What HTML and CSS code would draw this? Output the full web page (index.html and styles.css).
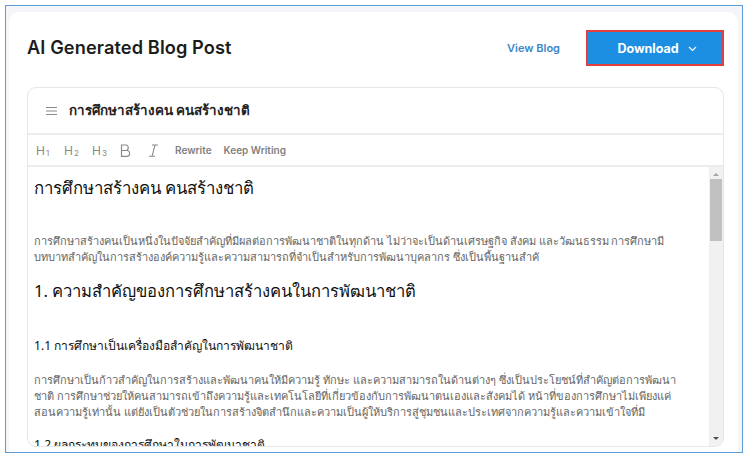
FILE: index.html
```html
<!DOCTYPE html>
<html lang="th">
<head>
<meta charset="utf-8">
<link rel="stylesheet" href="styles.css">
</head>
<body>
<div class="frame">
  <div class="card">
    <div class="topbar">
      <h1 class="page-title">AI Generated Blog Post</h1>
      <div class="actions">
        <a class="view-link">View Blog</a>
        <button class="download">Download
          <svg class="chev" width="9" height="6" viewBox="0 0 9 6"><path d="M1 1l3.5 3.5L8 1" fill="none" stroke="#fff" stroke-width="1.1"/></svg>
        </button>
      </div>
    </div>
    <div class="editor">
      <div class="ed-head">
        <svg class="burger" width="11" height="8" viewBox="0 0 11 8"><path d="M0 .5h11M0 4h11M0 7.5h11" stroke="#8a8a8a" stroke-width="1"/></svg>
        <span class="ed-title">การศึกษาสร้างคน คนสร้างชาติ</span>
      </div>
      <div class="toolbar">
        <span class="tb-h">H<sub>1</sub></span>
        <span class="tb-h">H<sub>2</sub></span>
        <span class="tb-h">H<sub>3</sub></span>
        <svg class="tb-icon" width="12" height="13" viewBox="0 0 12 13"><path d="M1.5 1h5a3 3 0 0 1 0 5.5h-5zM1.5 6.5h6a3 3 0 0 1 0 5.8h-6z" fill="none" stroke="#8a8a8a" stroke-width="1.2"/></svg>
        <svg class="tb-icon" width="11" height="13" viewBox="0 0 11 13"><path d="M4 1h6M1 12.3h6M7 1L4 12.3" fill="none" stroke="#8a8a8a" stroke-width="1.1"/></svg>
        <span class="tb-text">Rewrite</span>
        <span class="tb-text">Keep Writing</span>
      </div>
      <div class="body">
        <div class="content">
          <h2 class="c-h1">การศึกษาสร้างคน คนสร้างชาติ</h2>
          <p class="c-p"><span>การศึกษาสร้างคนเป็นหนึ่งในปัจจัยสำคัญที่มีผลต่อการพัฒนาชาติในทุกด้าน ไม่ว่าจะเป็นด้านเศรษฐกิจ สังคม และวัฒนธรรม การศึกษามี</span><span>บทบาทสำคัญในการสร้างองค์ความรู้และความสามารถที่จำเป็นสำหรับการพัฒนาบุคลากร ซึ่งเป็นพื้นฐานสำคั</span></p>
          <h2 class="c-h2">1. ความสำคัญของการศึกษาสร้างคนในการพัฒนาชาติ</h2>
          <h3 class="c-h3">1.1 การศึกษาเป็นเครื่องมือสำคัญในการพัฒนาชาติ</h3>
          <p class="c-p"><span>การศึกษาเป็นก้าวสำคัญในการสร้างและพัฒนาคนให้มีความรู้ ทักษะ และความสามารถในด้านต่างๆ ซึ่งเป็นประโยชน์ที่สำคัญต่อการพัฒนา</span><span>ชาติ การศึกษาช่วยให้คนสามารถเข้าถึงความรู้และเทคโนโลยีที่เกี่ยวข้องกับการพัฒนาตนเองและสังคมได้ หน้าที่ของการศึกษาไม่เพียงแค่</span><span>สอนความรู้เท่านั้น แต่ยังเป็นตัวช่วยในการสร้างจิตสำนึกและความเป็นผู้ให้บริการสู่ชุมชนและประเทศจากความรู้และความเข้าใจที่มี</span></p>
          <h3 class="c-h3 last">1.2 ผลกระทบของการศึกษาในการพัฒนาชาติ</h3>
        </div>
        <div class="scrollbar">
          <div class="arrow up"></div>
          <div class="thumb"></div>
          <div class="arrow down"></div>
        </div>
      </div>
    </div>
  </div>
</div>
</body>
</html>
```
FILE: styles.css
```css
* { box-sizing: border-box; }
html, body { margin: 0; padding: 0; background: #fff; }
body { width: 749px; height: 457px; overflow: hidden; padding: 5px 0 0 5px; font-family: "Noto Sans", sans-serif; }

.frame {
  width: 738px;
  height: 448px;
  border: 1px solid #5e9cd8;
  background: #f3f5f8;
  padding: 6px 4px 0 3px;
  overflow: hidden;
}
.card {
  background: #fff;
  border-radius: 10px 10px 0 0;
  height: 460px;
  padding: 0 14px 0 18px;
}
.topbar {
  display: flex;
  align-items: center;
  justify-content: space-between;
  height: 70px;
  margin-bottom: 5px;
}
.page-title {
  margin: 0;
  font-family: "Inter", sans-serif;
  font-weight: 600;
  font-size: 18.2px;
  color: #1c1c1c;
  letter-spacing: 0.1px;
}
.actions { display: flex; align-items: center; gap: 26px; padding-top: 2px; }
.view-link {
  font-family: "Inter", sans-serif;
  font-weight: 600;
  font-size: 11px;
  color: #3c87c9;
}
.download {
  width: 138px;
  height: 36px;
  background: #1d8fe2;
  border: 2px solid #e2403f;
  color: #fff;
  font-family: "Inter", sans-serif;
  font-weight: 700;
  font-size: 12.5px;
  display: flex;
  align-items: center;
  justify-content: center;
  gap: 9px;
  padding: 0 0 0 4px;
}
.chev { margin-top: 2px; }

.editor {
  border: 1px solid #e6e6e6;
  border-radius: 9px;
  overflow: hidden;
  height: 360px;
  display: flex;
  flex-direction: column;
}
.ed-head {
  height: 47px;
  display: flex;
  align-items: center;
  padding-left: 18px;
  gap: 12px;
  border-bottom: 2px solid #ececec;
}
.burger { margin-top: 1px; }
.ed-title {
  font-size: 13.4px;
  font-weight: 700;
  color: #222;
}
.toolbar {
  height: 32px;
  display: flex;
  align-items: center;
  padding-left: 8px;
  gap: 0;
  border-bottom: 2px solid #ececec;
  color: #8a8a8a;
}
.tb-h {
  font-family: "Inter", sans-serif;
  font-size: 12px;
  width: 28px;
  color: #8a8a8a;
}
.tb-h sub { font-size: 8px; vertical-align: -1px; margin-left: 1px; }
.tb-icon { margin-right: 16px; }
.tb-text {
  font-family: "Inter", sans-serif;
  font-weight: 600;
  font-size: 10px;
  color: #7f7f7f;
  margin-right: 12px;
}
.body {
  flex: 1;
  display: flex;
  min-height: 0;
}
.content {
  flex: 1;
  padding: 8px 0 0 6px;
  overflow: hidden;
  color: #222;
}
.c-h1 {
  margin: 0 0 32px;
  font-size: 16.8px;
  font-weight: 400;
  line-height: 26px;
  color: #111;
}
.c-p {
  margin: 0 0 12px;
  font-size: 11px;
  line-height: 16.3px;
  color: #666;
}
.c-p span { display: block; white-space: nowrap; }
.c-h2 {
  margin: 0 0 33px;
  font-size: 16.6px;
  font-weight: 400;
  line-height: 26px;
  color: #111;
}
.c-h3 {
  margin: 0 0 17px;
  font-size: 12.1px;
  font-weight: 400;
  line-height: 18px;
  color: #111;
}
.c-h3.last { margin-top: 16px; }
.scrollbar {
  width: 14px;
  background: #f1f1f1;
  display: flex;
  flex-direction: column;
  align-items: center;
  padding: 4px 0 2px;
}
.arrow { width: 0; height: 0; border-left: 3px solid transparent; border-right: 3px solid transparent; }
.arrow.up { border-bottom: 3px solid #a3a3a3; margin: 2px 0 3px; }
.arrow.down { border-top: 3px solid #505050; margin-top: auto; margin-bottom: 4px; }
.thumb { width: 12px; height: 62px; background: #c1c1c1; }
```
